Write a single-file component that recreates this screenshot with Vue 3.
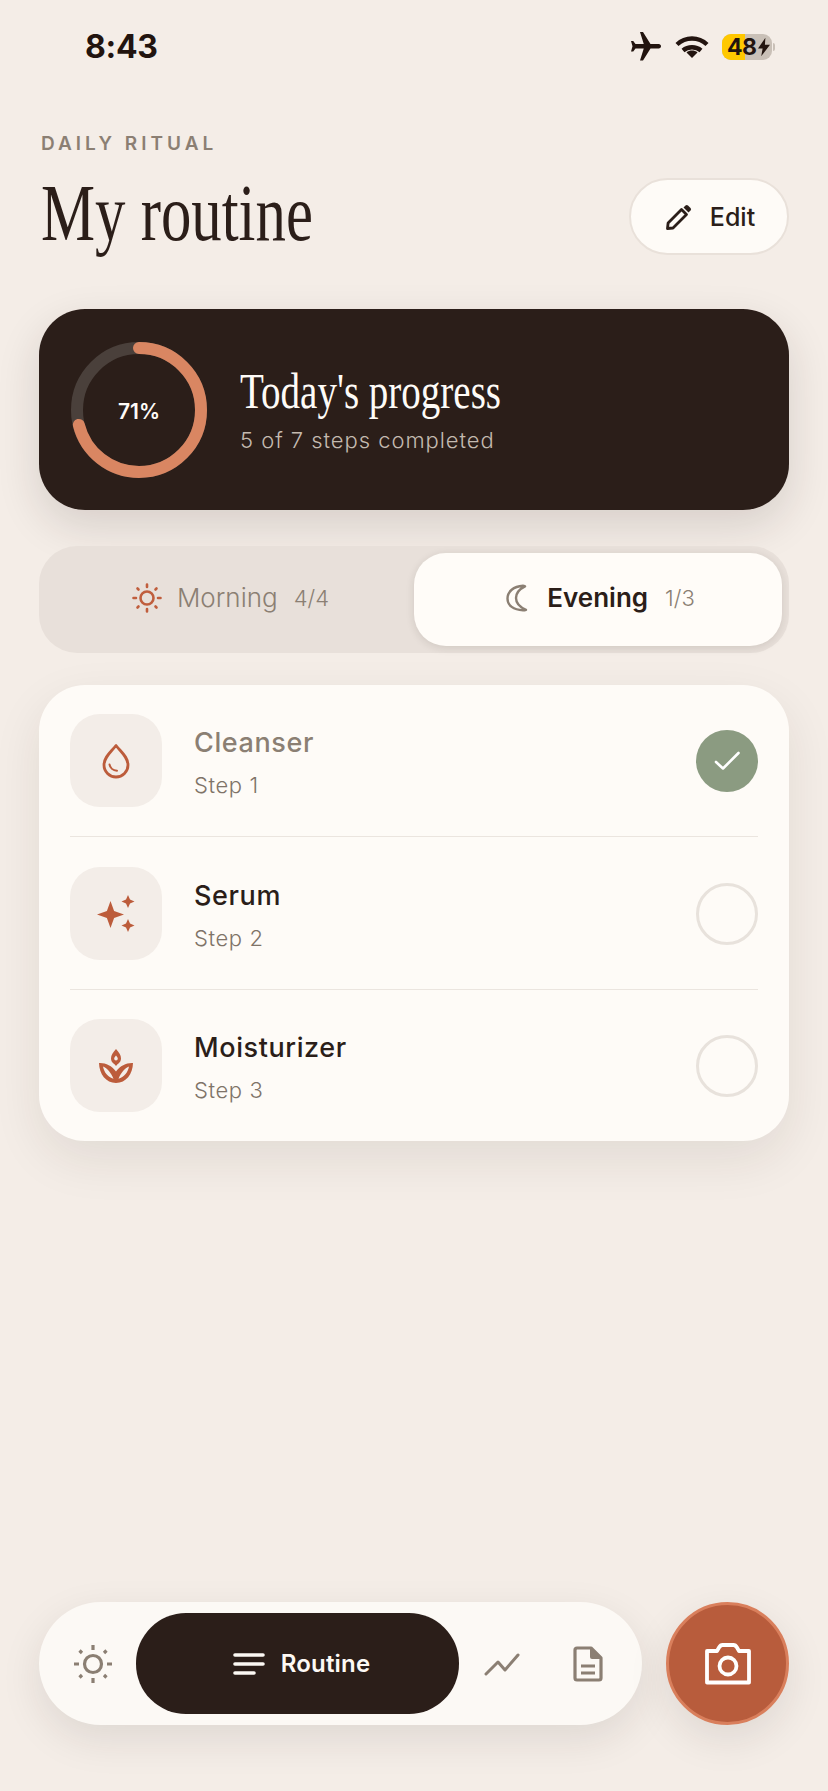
<script setup>
const steps = [
  { name: 'Cleanser', step: 'Step 1', done: true, icon: 'drop' },
  { name: 'Serum', step: 'Step 2', done: false, icon: 'spark' },
  { name: 'Moisturizer', step: 'Step 3', done: false, icon: 'lotus' },
]
const r = 62
const circ = 2 * Math.PI * r
const dash = `${circ * 0.71} ${circ}`
</script>

<template>
  <div class="page">
    <div class="status">
      <span class="time">8:43</span>
      <div class="status-icons">
        <svg class="plane" width="36" height="36" viewBox="0 0 24 24"><path transform="rotate(90 12 12)" d="M21 16v-2l-8-5V3.500c0-.83-.67-1.500-1.500-1.500S10 2.670 10 3.500V9l-8 5v2l8-2.500V19l-2 1.500V22l3.500-1 3.500 1v-1.500L13 19v-5.500l8 2.500z" fill="#22140f"/></svg>
        <svg width="34" height="22" viewBox="0 0 34 22" fill="none" stroke="#22140f" stroke-width="4.400"><path d="M2 8.500C10.500 .5 23.500 .5 32 8.500"/><path d="M8 14.500c5-4.300 13-4.300 18 0"/><path d="M17 22l-5.500-5.500c3-2.600 8-2.600 11 0z" fill="#22140f" stroke="none"/></svg>
        <div class="battery">
          <div class="bat-fill"></div>
          <span class="bat-text">48</span>
          <svg class="bolt" width="12" height="20" viewBox="0 0 13 20"><path d="M8 0L0 11.500h5L3.500 20 13 7.500H7.500z" fill="#22140f"/></svg>
        </div>
        <i class="nub"></i>
      </div>
    </div>

    <header class="head">
      <div class="eyebrow">DAILY RITUAL</div>
      <div class="title-row">
        <h1 class="title"><span>My routine</span></h1>
        <button class="edit">
          <svg width="28" height="28" viewBox="0 0 28 28" fill="none"><path d="M2.500 25.500l.6-5.500L16.500 6.500l5 5L8 25z" stroke="#2b1e19" stroke-width="2.800" stroke-linejoin="round"/><path d="M20.500 2.500a1.800 1.800 0 0 1 2.500 0l2.500 2.500a1.800 1.800 0 0 1 0 2.500l-2 2-5-5z" fill="#2b1e19"/></svg>
          <span>Edit</span>
        </button>
      </div>
    </header>

    <section class="progress">
      <div class="ring">
        <svg width="136" height="136" viewBox="0 0 136 136" fill="none">
          <circle cx="68" cy="68" :r="r" stroke="#4a403b" stroke-width="12"/>
          <circle cx="68" cy="68" :r="r" stroke="#d98662" stroke-width="12" stroke-linecap="round" :stroke-dasharray="dash" transform="rotate(-90 68 68)"/>
        </svg>
        <span class="pct">71%</span>
      </div>
      <div class="prog-text">
        <div class="prog-title"><span>Today's progress</span></div>
        <div class="prog-sub">5 of 7 steps completed</div>
      </div>
    </section>

    <div class="seg">
      <button class="seg-btn">
        <svg width="32" height="32" viewBox="0 0 32 32" fill="none" stroke="#c05e3d" stroke-width="2.600" stroke-linecap="round"><circle cx="16" cy="16" r="6.500"/><path d="M16 2.500v2.500M16 27v2.500M2.500 16H5M27 16h2.500M6.500 6.500l1 1M24.500 24.500l1 1M6.500 25.500l1-1M24.500 7.500l1-1"/></svg>
        <span class="seg-label">Morning</span>
        <span class="seg-count">4/4</span>
      </button>
      <button class="seg-btn active">
        <svg class="moon" width="22" height="28" viewBox="0 0 22 28" fill="none" stroke="#8b7f73" stroke-width="2.400" stroke-linejoin="round"><path d="M17 1.800C7.500 2.500 1.500 7.500 1.500 14.500S7.500 26 17 26.300c1.200 0 2.200-.2 3-.5C13.500 23 10 19 10 14S13.500 5 19 2.300c-.6-.3-1.300-.5-2-.5z"/></svg>
        <span class="seg-label">Evening</span>
        <span class="seg-count">1/3</span>
      </button>
    </div>

    <section class="list">
      <div v-for="s in steps" :key="s.name" class="row">
        <div class="tile">
          <svg v-if="s.icon === 'drop'" width="30" height="36" viewBox="0 0 30 36" fill="none" stroke="#bc5c3b" stroke-width="2.800" stroke-linecap="round" stroke-linejoin="round"><path d="M15 2.500C10 9 3 14 3 22a12 12 0 0 0 24 0C27 14 20 9 15 2.500z"/><path d="M8.500 21.500c.5 3.200 3.500 6 7.500 6.300" stroke-width="2"/></svg>
          <svg v-else-if="s.icon === 'spark'" width="38" height="38" viewBox="0 0 38 38" fill="#bc5c3b"><path d="M13.500 6l3.600 9.900 9.900 3.600-9.900 3.600-3.600 9.900-3.600-9.900L0 19.500l9.900-3.600z"/><path d="M31 0l2 4.500 4.500 2-4.500 2-2 4.500-2-4.500-4.500-2 4.500-2z"/><path d="M31 24l2 4.500 4.500 2-4.500 2-2 4.500-2-4.500-4.500-2 4.500-2z"/></svg>
          <svg v-else width="36" height="36" viewBox="0 0 36 36" fill="#bc5c3b"><path d="M18 1c-3 3.500-5 6-5 9.500 0 2.200 1.100 3.900 2.500 5 .8.700 1.700 1.400 2.500 2.500.8-1.100 1.700-1.800 2.500-2.500 1.400-1.100 2.500-2.800 2.500-5C23 7 21 4.500 18 1z"/><path d="M18 7.500c-1.200 1.400-1.800 2.300-1.800 3.300a1.800 1.800 0 0 0 3.600 0c0-1-.6-1.900-1.800-3.300z" fill="#f3ede8"/><path fill-rule="evenodd" d="M1 15c6.500-.4 12.500 2.500 17 8.500 4.500-6 10.500-8.900 17-8.500-.2 11-7 20-17 20S1.200 26 1 15zm4 3.500c1.200 6.200 5 10.500 10.500 12.300-2.500-6-6.200-10.500-10.500-12.300zm26 0c-4.300 1.800-8 6.300-10.500 12.300 5.500-1.800 9.300-6.100 10.500-12.300z"/></svg>
        </div>
        <div class="row-text">
          <div class="row-name" :class="{ done: s.done }">{{ s.name }}</div>
          <div class="row-step">{{ s.step }}</div>
        </div>
        <div class="check" :class="{ on: s.done }">
          <svg v-if="s.done" width="26" height="20" viewBox="0 0 26 20" fill="none" stroke="#fff" stroke-width="2.600" stroke-linecap="round" stroke-linejoin="round"><path d="M2 11l7 6.500L24.500 2"/></svg>
        </div>
      </div>
    </section>

    <div class="bottom">
      <nav class="nav">
        <button class="nav-btn">
          <svg width="40" height="40" viewBox="0 0 40 40" fill="none" stroke="#8b7f73" stroke-width="3.200"><circle cx="20" cy="20" r="8.500"/><path d="M20 1v5M20 34v5M1 20h5M34 20h5M6.500 6.500l2.500 2.500M31 31l2.500 2.500M6.500 33.500L9 31M31 9l2.500-2.500"/></svg>
        </button>
        <button class="nav-pill">
          <svg width="32" height="22" viewBox="0 0 32 22" fill="none" stroke="#fdf9f4" stroke-width="3.600" stroke-linecap="round"><path d="M2 2h28M2 11h28M2 20h19"/></svg>
          <span>Routine</span>
        </button>
        <button class="nav-btn">
          <svg width="36" height="24" viewBox="0 0 36 24" fill="none" stroke="#8b7f73" stroke-width="3" stroke-linecap="round" stroke-linejoin="round"><path d="M2 22l12-12 7 8L34 3"/></svg>
        </button>
        <button class="nav-btn">
          <svg width="30" height="36" viewBox="0 0 30 36" fill="none"><path d="M4 2h14l10 10v20a2 2 0 0 1-2 2H4a2 2 0 0 1-2-2V4a2 2 0 0 1 2-2z" stroke="#8b7f73" stroke-width="3.200" stroke-linejoin="round"/><path d="M17 2l11 11H19a2 2 0 0 1-2-2z" fill="#8b7f73"/><path d="M8 20h14M8 27h14" stroke="#8b7f73" stroke-width="3"/></svg>
        </button>
      </nav>
      <button class="fab">
        <svg width="46" height="42" viewBox="0 0 46 42" fill="none" stroke="#fff" stroke-width="3.800" stroke-linejoin="round"><path d="M2 8h10l2-3.500C15 2.800 16 2 17.500 2h11c1.500 0 2.500.8 3.500 2.500L34 8h10v31.500H2z"/><circle cx="23" cy="23" r="8.500"/></svg>
      </button>
    </div>
  </div>
</template>

<style>
html, body { margin: 0; background: #f4ede7; }
</style>

<style scoped>
.page {
  width: 828px;
  height: 1791px;
  overflow: hidden;
  display: flex;
  flex-direction: column;
  background: #f4ede7;
  color: #2b1e19;
  font-family: Inter, "Liberation Sans", sans-serif;
}
button { font-family: inherit; border: none; background: none; padding: 0; color: inherit; }

.status {
  padding: 34px 53px 0 85px;
  box-sizing: border-box;
  height: 94px;
  display: flex;
  justify-content: space-between;
  align-items: flex-start;
}
.time { font-size: 32px; line-height: 26px; font-weight: 700; color: #22140f; letter-spacing: -0.3px; }
.status-icons { display: flex; align-items: center; height: 26px; }
.plane { margin-right: 11px; }
.battery {
  position: relative;
  margin-left: 13px;
  width: 50px;
  height: 26px;
  border-radius: 9px;
  overflow: hidden;
  background: #c9c0b7;
  display: flex;
  align-items: center;
  color: #22140f;
}
.bat-fill { position: absolute; left: 0; top: 0; bottom: 0; width: 23px; background: #ffc800; }
.bat-text { position: relative; margin-left: 5px; font-size: 23px; font-weight: 700; line-height: 26px; letter-spacing: -0.5px; }
.bolt { position: relative; margin-left: 1px; }
.nub { width: 2px; height: 8px; background: #c9c0b7; margin-left: 1px; border-radius: 0 2px 2px 0; }

.head { padding: 38px 39px 0 41px; }
.eyebrow { font-size: 19px; line-height: 24px; font-weight: 600; letter-spacing: 4px; color: #8b7f73; }
.title-row { margin-top: 22px; height: 77px; display: flex; justify-content: space-between; align-items: flex-start; }
.title { margin: 0; font-family: "Liberation Serif", serif; font-weight: 400; font-size: 80px; line-height: 70px; color: #2b1e19; }
.title span { display: inline-block; transform: scaleX(0.76); transform-origin: left center; }
.edit {
  width: 160px;
  height: 77px;
  box-sizing: border-box;
  padding-left: 2px;
  border-radius: 39px;
  border: 2px solid #e9e1da;
  background: #fefbf7;
  display: flex;
  align-items: center;
  justify-content: center;
  gap: 17px;
  font-size: 25px;
  font-weight: 500;
}

.progress {
  margin: 54px 39px 0;
  height: 201px;
  border-radius: 46px;
  background: #2b1e19;
  box-shadow: 0 16px 44px rgba(43, 30, 25, 0.14);
  display: flex;
  align-items: center;
  padding-left: 32px;
  gap: 33px;
}
.ring { position: relative; width: 136px; height: 136px; display: flex; align-items: center; justify-content: center; }
.ring svg { position: absolute; inset: 0; }
.pct { position: relative; top: 2px; color: #fefbf7; font-size: 21px; font-weight: 600; }
.prog-title { font-family: "Liberation Serif", serif; font-size: 50px; line-height: 52px; color: #fefbf7; white-space: nowrap; }
.prog-title span { display: inline-block; transform: scaleX(0.78); transform-origin: left center; }
.prog-sub { margin-top: 9px; font-size: 22px; line-height: 28px; font-weight: 300; color: #c4bab0; letter-spacing: 0.95px; }

.seg {
  margin: 36px 39px 0;
  height: 107px;
  box-sizing: border-box;
  padding: 7px;
  border-radius: 38px;
  background: #e8e0da;
  display: flex;
}
.seg-btn { flex: 0 0 50%; box-sizing: border-box; display: flex; align-items: center; justify-content: center; color: #8b7f73; padding-bottom: 4px; }
.seg-btn svg { margin-right: 14px; }
.seg-btn .moon { margin-right: 19px; }
.seg-btn.active {
  padding-left: 5px;
  background: #fffcf8;
  border-radius: 32px;
  box-shadow: 0 2px 8px rgba(43, 30, 25, 0.12);
}
.seg-label { font-size: 26px; font-weight: 300; }
.seg-count { margin-left: 16px; font-size: 22px; font-weight: 300; }
.active .seg-label { color: #2b1e19; font-weight: 600; font-size: 26px; }
.active .seg-count { margin-left: 17px; }

.list {
  margin: 32px 39px 0;
  padding: 0 31px;
  border-radius: 46px;
  background: #fefbf7;
  box-shadow: 0 18px 50px rgba(43, 30, 25, 0.09);
}
.row {
  padding: 30px 0 29px;
  display: flex;
  align-items: center;
  border-bottom: 1px solid #ebe5df;
}
.row:first-child { padding: 29px 0 29px; }
.row:last-child { padding: 29px 0; border-bottom: none; }
.tile { width: 92px; height: 93px; border-radius: 30px; background: #f3ede8; display: flex; align-items: center; justify-content: center; }
.row-text { flex: 1; margin-left: 32px; padding-top: 3px; }
.row-name { font-size: 27px; line-height: 34px; font-weight: 500; letter-spacing: 0.6px; color: #2b1e19; }
.row-name.done { color: #8b7f73; }
.row-step { margin-top: 11px; font-size: 22px; line-height: 28px; font-weight: 300; letter-spacing: 0.6px; color: #7f7368; }
.check { width: 62px; height: 62px; box-sizing: border-box; border-radius: 50%; border: 3px solid #e8e2dc; display: flex; align-items: center; justify-content: center; }
.check.on { border: none; background: #8b9b81; }

.bottom { margin-top: auto; padding: 0 39px 66px; display: flex; gap: 24px; }
.nav {
  flex: 1;
  height: 123px;
  box-sizing: border-box;
  padding: 11px;
  border-radius: 62px;
  background: #fcf9f5;
  box-shadow: 0 14px 40px rgba(43, 30, 25, 0.1);
  display: flex;
}
.nav-btn { width: 86px; display: flex; align-items: center; justify-content: center; }
.nav-pill {
  flex: 1;
  box-sizing: border-box;
  padding-left: 8px;
  border-radius: 50px;
  background: #2b1e19;
  color: #fdf9f4;
  display: flex;
  align-items: center;
  justify-content: center;
  gap: 16px;
  font-size: 24px;
  font-weight: 600;
  letter-spacing: 0.2px;
}
.fab {
  width: 123px;
  height: 123px;
  box-sizing: border-box;
  border-radius: 50%;
  border: 3px solid #d97f5c;
  background: #b85c3c;
  box-shadow: 0 14px 40px rgba(43, 30, 25, 0.1);
  display: flex;
  align-items: center;
  justify-content: center;
}
</style>
